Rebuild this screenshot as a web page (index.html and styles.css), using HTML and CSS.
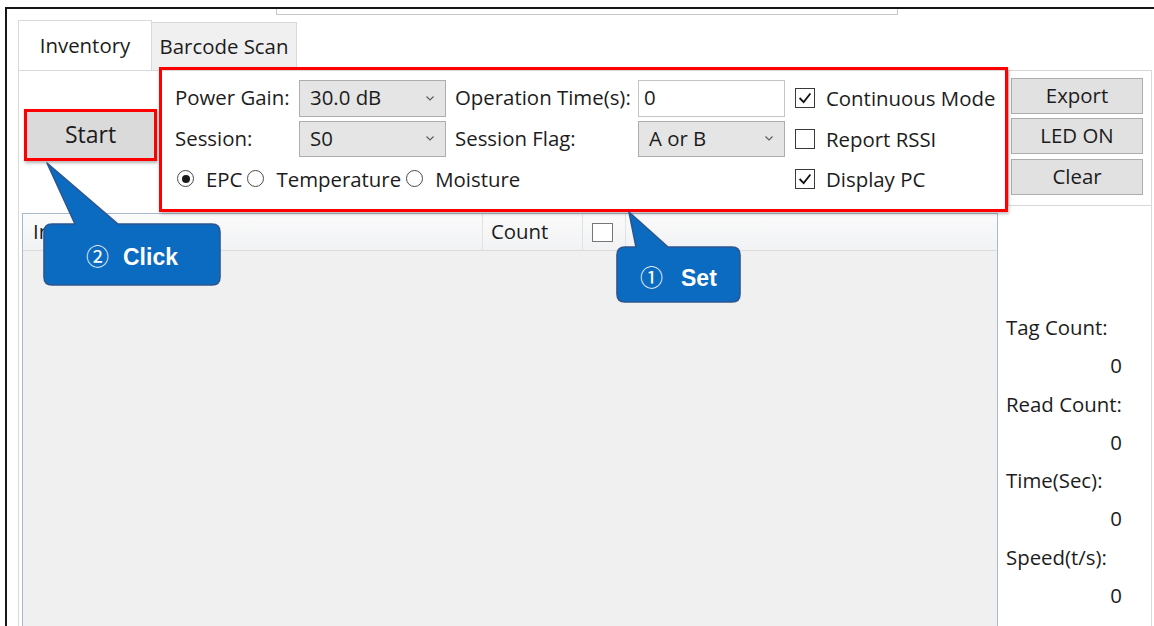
FILE: index.html
```html
<!DOCTYPE html>
<html lang="en">
<head>
<meta charset="utf-8">
<title>Inventory</title>
<link rel="stylesheet" href="styles.css">
</head>
<body>
<div class="window">
  <div class="addr-field"></div>
  <div class="tabs">
    <div class="tab tab-active">Inventory</div>
    <div class="tab">Barcode Scan</div>
  </div>
  <div class="page">
    <div class="top-row">
      <div class="start-col">
        <button class="btn start-btn" type="button">Start</button>
      </div>
      <div class="settings">
        <span class="lbl">Power Gain:</span>
        <div class="combo"><span>30.0 dB</span><svg class="chev" viewBox="0 0 8 5"><path d="M0.5 0.5 L4 4 L7.5 0.5"/></svg></div>
        <span class="lbl">Operation Time(s):</span>
        <div class="textbox">0</div>
        <label class="check"><span class="box"><svg viewBox="0 0 20 20"><path d="M4 10 L8.5 14.5 L16 5"/></svg></span>Continuous Mode</label>

        <span class="lbl">Session:</span>
        <div class="combo"><span>S0</span><svg class="chev" viewBox="0 0 8 5"><path d="M0.5 0.5 L4 4 L7.5 0.5"/></svg></div>
        <span class="lbl">Session Flag:</span>
        <div class="combo"><span>A or B</span><svg class="chev" viewBox="0 0 8 5"><path d="M0.5 0.5 L4 4 L7.5 0.5"/></svg></div>
        <label class="check"><span class="box"></span>Report RSSI</label>

        <div class="radios">
          <label class="radio"><span class="dot on"></span>EPC</label>
          <label class="radio"><span class="dot"></span>Temperature</label>
          <label class="radio"><span class="dot"></span>Moisture</label>
        </div>
        <label class="check"><span class="box"><svg viewBox="0 0 20 20"><path d="M4 10 L8.5 14.5 L16 5"/></svg></span>Display PC</label>
      </div>
      <div class="actions">
        <button class="btn" type="button">Export</button>
        <button class="btn" type="button">LED ON</button>
        <button class="btn btn-last" type="button">Clear</button>
      </div>
    </div>
    <div class="bottom-row">
      <div class="grid">
        <div class="grid-head">
          <div class="col col-main">Index</div>
          <div class="col col-count">Count</div>
          <div class="col col-sel"><span class="box"></span></div>
          <div class="col col-rest"></div>
        </div>
      </div>
      <div class="stats">
        <div class="stat-label">Tag Count:</div>
        <div class="stat-value">0</div>
        <div class="stat-label">Read Count:</div>
        <div class="stat-value">0</div>
        <div class="stat-label">Time(Sec):</div>
        <div class="stat-value">0</div>
        <div class="stat-label">Speed(t/s):</div>
        <div class="stat-value">0</div>
      </div>
    </div>
  </div>
</div>

<!-- step callouts -->
<svg class="callout callout-click" viewBox="40 158 185 132">
  <path d="M52 224 L75 224 L47 163 L118 224 L212 224 Q220 224 220 232 L220 277 Q220 285 212 285 L52 285 Q44 285 44 277 L44 232 Q44 224 52 224 Z"/>
  <text x="86" y="265"><tspan class="num">②</tspan><tspan x="123">Click</tspan></text>
</svg>
<svg class="callout callout-set" viewBox="612 205 134 102">
  <path d="M625 247 L636 247 L629 212 L668 247 L732 247 Q740 247 740 255 L740 294 Q740 302 732 302 L625 302 Q617 302 617 294 L617 255 Q617 247 625 247 Z"/>
  <text x="640" y="286"><tspan class="num">①</tspan><tspan x="681">Set</tspan></text>
</svg>
</body>
</html>
```

FILE: styles.css
```css
* { box-sizing: border-box; }

html, body { margin: 0; padding: 0; }

body {
  position: relative;
  width: 1154px;
  height: 626px;
  overflow: hidden;
  background: #fff;
  font-family: "Open Sans", "Noto Sans", sans-serif;
  font-size: 20.4px;
  color: #1c1c1c;
}

/* outer window frame */
.window {
  margin: 7px 0 0 5px;
  height: 619px;
  border-top: 2px solid #161616;
  border-left: 2px solid #161616;
  display: flex;
  flex-direction: column;
}

.addr-field {
  flex: none;
  margin-left: 269px;
  width: 622px;
  height: 6px;
  border: 1px solid #c8c8c8;
  border-top: 0;
}

/* tab strip */
.tabs {
  flex: none;
  display: flex;
  align-items: flex-end;
  margin: 5px 0 0 11px;
  height: 50px;
}

.tab {
  width: 145px;
  height: 48px;
  display: flex;
  align-items: center;
  justify-content: center;
  padding-bottom: 2px;
  background: #f0f0f0;
  border: 1px solid #d9d9d9;
  border-left: 0;
  border-bottom: 0;
  white-space: nowrap;
}

.tab-active {
  width: 134px;
  height: 50px;
  background: #fff;
  border-left: 1px solid #d9d9d9;
}

.page {
  flex: 1;
  min-height: 0;
  margin-left: 11px;
  width: 1134px;
  border: 1px solid #d9d9d9;
  border-bottom: 0;
  display: flex;
  flex-direction: column;
}

.top-row {
  flex: none;
  display: flex;
  height: 142px;
}

.btn {
  font: inherit;
  color: inherit;
  background: #e1e1e1;
  border: 1px solid #adadad;
  padding: 0 0 2px;
  height: 36px;
  width: 132px;
}

.start-col { flex: none; width: 140px; }

.start-btn {
  margin: 38px 0 0 5px;
  width: 133px;
  height: 52px;
  font-size: 23px;
  background: #dadada;
  border: 3px solid #f00;
  box-shadow: 1px 2px 3px rgba(0, 0, 0, 0.3);
}

/* settings group */
.settings {
  flex: none;
  position: relative;
  z-index: 2;
  width: 849px;
  height: 145px;
  margin-top: -4px;
  border: 3px solid #f00;
  box-shadow: 1px 2px 3px rgba(0, 0, 0, 0.25);
  padding: 10px 0 0 13px;
  display: grid;
  grid-template-columns: 115px 147px 174px 147px 1fr;
  grid-template-rows: 37px 36px 36px;
  column-gap: 9px;
  row-gap: 4px;
  align-items: center;
  white-space: nowrap;
  line-height: 1.2;
}

.lbl { padding-bottom: 2px; }

.combo {
  align-self: stretch;
  display: flex;
  align-items: center;
  justify-content: space-between;
  padding: 0 11px 2px 10px;
  background: #e5e5e5;
  border: 1px solid #adadad;
}

.chev {
  width: 8px;
  height: 5px;
  margin-top: 1px;
}

.chev path {
  fill: none;
  stroke: #5a5a5a;
  stroke-width: 1.1;
}

.textbox {
  align-self: stretch;
  display: flex;
  align-items: center;
  padding: 0 0 2px 5px;
  background: #fff;
  border: 1px solid #c4c4c4;
}

.check {
  display: flex;
  align-items: center;
  margin-left: 1px;
}

.box {
  flex: none;
  width: 20px;
  height: 20px;
  margin-right: 11px;
  background: #fff;
  border: 1px solid #3a3a3a;
  display: flex;
}

.box svg { width: 100%; height: 100%; }

.box path {
  fill: none;
  stroke: #111;
  stroke-width: 2;
}

.radios {
  grid-column: 1 / 5;
  display: flex;
  align-items: center;
  margin-left: 2px;
}

.radio {
  display: flex;
  align-items: center;
  margin-right: 5px;
}

.dot {
  width: 17px;
  height: 17px;
  margin-right: 12px;
  border: 1px solid #4a4a4a;
  border-radius: 50%;
  background: #fff;
  display: flex;
  align-items: center;
  justify-content: center;
}

.dot.on::after {
  content: "";
  width: 8px;
  height: 8px;
  border-radius: 50%;
  background: #1a1a1a;
}

/* right button group */
.actions {
  flex: 1;
  height: 136px;
  margin-top: -1px;
  padding: 7px 0 0 2px;
  border: 1px solid #d7d7d7;
  border-right: 0;
  display: flex;
  flex-direction: column;
  gap: 4px;
}

.btn-last { margin-top: 1px; }

/* result table */
.bottom-row {
  flex: 1;
  min-height: 0;
  display: flex;
}

.grid {
  flex: none;
  margin-left: 3px;
  width: 976px;
  border: 1px solid #a9b8cc;
  border-bottom: 0;
  background: #f0f0f0;
}

.grid-head {
  display: flex;
  height: 37px;
  background: linear-gradient(#fbfbfc, #f1f2f3);
  border-bottom: 1px solid #dcdcdc;
}

.col {
  display: flex;
  align-items: center;
  border-right: 1px solid #e2e2e2;
}

.col-main { width: 460px; padding-left: 10px; padding-bottom: 2px; }
.col-count { width: 100px; padding-left: 8px; padding-bottom: 2px; }
.col-sel { width: 43px; padding-left: 9px; }
.col-sel .box { width: 21px; height: 19px; border-color: #777; }
.col-rest { flex: 1; border-right: 0; }

.stats {
  flex: 1;
  padding: 95px 29px 0 8px;
  line-height: 38.3px;
  white-space: nowrap;
}

.stat-value { text-align: right; }

/* step callouts */
.callout {
  position: absolute;
  z-index: 5;
  overflow: visible;
}

.callout-click { left: 40px; top: 158px; width: 185px; height: 132px; }
.callout-set { left: 612px; top: 205px; width: 134px; height: 102px; }

.callout path {
  fill: #0b6bc0;
  stroke: #2d5690;
  stroke-width: 1.6;
  stroke-linejoin: round;
}

.callout text {
  fill: #fff;
  font-family: "Liberation Sans", Arial, sans-serif;
  font-weight: bold;
  font-size: 23px;
}

.callout .num {
  font-family: "Noto Sans CJK SC", "DejaVu Sans", sans-serif;
  font-weight: normal;
  font-size: 23px;
}
```
